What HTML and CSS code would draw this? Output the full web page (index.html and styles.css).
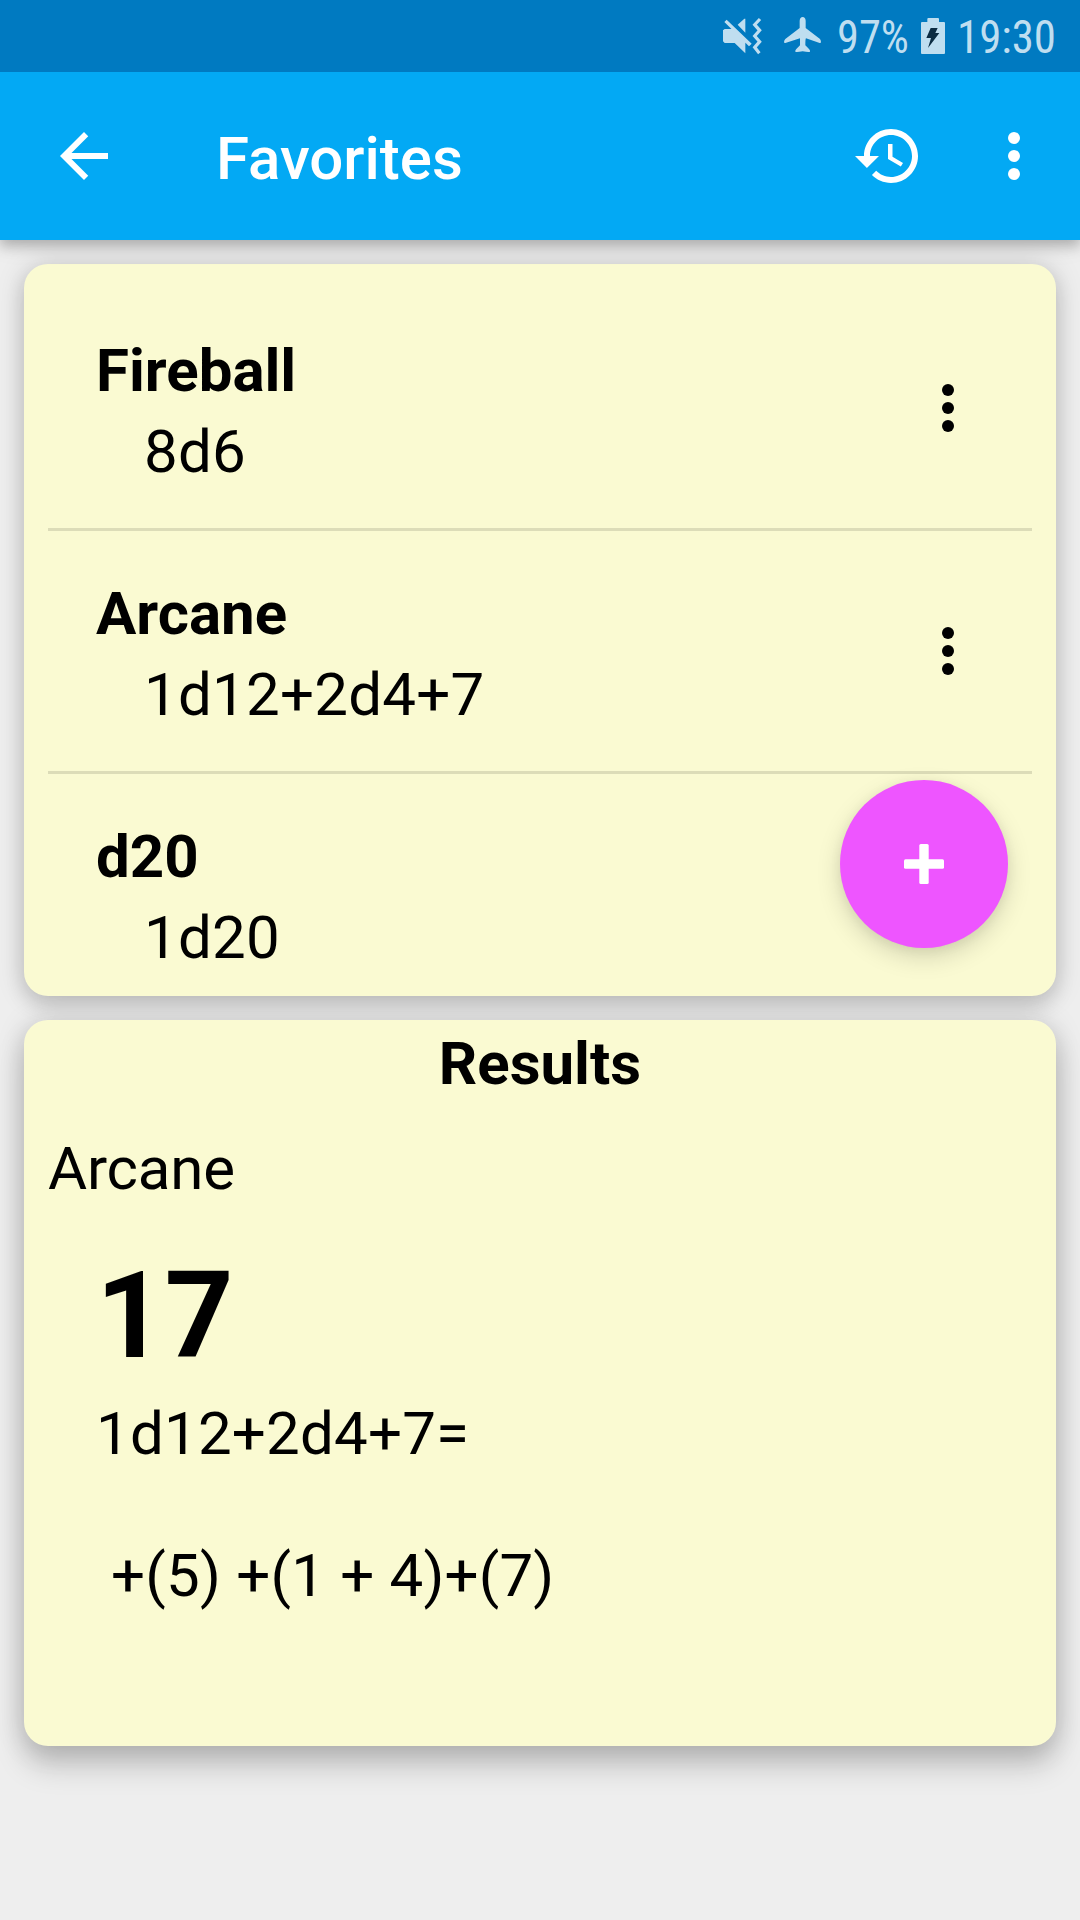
FILE: index.html
```html
<!DOCTYPE html>
<html lang="en">
<head>
<meta charset="utf-8">
<title>Favorites</title>
<link rel="stylesheet" href="styles.css">
</head>
<body>
<div class="screen">
  <div class="status-bar">
    <svg class="icon-mute" viewBox="66 48 120 120" width="40" height="40">
      <path fill="currentColor" d="M69 91L74 87H96L136 126V160L104 129H74L69 124ZM73 66L80 59L155 131L147 139ZM113 74L133 56H136V98Z"/>
      <path fill="none" stroke="currentColor" stroke-width="9.5" d="M180 57L164 74L179 91L164 108L179 125L164 142L178 160"/>
    </svg>
    <svg class="icon-plane" viewBox="249 48 117 120" width="39" height="40">
      <path fill="currentColor" d="M299 62Q300 51 308 51Q316 51 317 62V84L360 117Q363 121 363 127Q362 130 359 129L318 115Q316 116 316 136L327 147Q331 150 330 155Q328 158 308 154Q288 158 286 155Q285 150 289 147L300 136V115L256 129Q253 130 252 127Q252 121 256 117L299 84Z"/>
    </svg>
    <svg class="status-text battery-level" width="76" height="72"><text x="2" y="53" textLength="72" lengthAdjust="spacingAndGlyphs">97%</text></svg>
    <svg class="icon-battery" viewBox="663 48 72 120" width="24" height="40">
      <path fill="currentColor" d="M682 57Q682 54 685 54H714Q717 54 717 57V66H732Q735 66 735 69V159Q735 162 732 162H666Q663 162 663 159V69Q663 66 666 66H682Z"/>
      <path class="bolt" d="M692 84H713L706 99H718L684 144L693 114H679Z"/>
    </svg>
    <svg class="status-text clock" width="104" height="72"><text x="3" y="53" textLength="99" lengthAdjust="spacingAndGlyphs">19:30</text></svg>
  </div>

  <header class="app-bar">
    <svg class="icon" viewBox="0 0 24 24"><path d="M20 11H7.83l5.59-5.59L12 4l-8 8 8 8 1.41-1.41L7.83 13H20v-2z"/></svg>
    <h1 class="title">Favorites</h1>
    <svg class="icon" viewBox="0 0 24 24"><path d="M13 3c-4.97 0-9 4.03-9 9H1l3.89 3.89.07.14L9 12H6c0-3.87 3.13-7 7-7s7 3.13 7 7-3.13 7-7 7c-1.93 0-3.68-.79-4.94-2.06l-1.42 1.42C8.27 19.99 10.51 21 13 21c4.97 0 9-4.03 9-9s-4.03-9-9-9zm-1 5v5l4.28 2.54.72-1.21-3.5-2.08V8H12z"/></svg>
    <svg class="icon overflow" viewBox="0 0 24 24"><circle cx="12" cy="6" r="2"/><circle cx="12" cy="12" r="2"/><circle cx="12" cy="18" r="2"/></svg>
  </header>

  <main class="content">
    <section class="card favorites">
      <ul class="list">
        <li class="row">
          <div><div class="name">Fireball</div><div class="dice">8d6</div></div>
          <svg class="icon" viewBox="0 0 24 24"><circle cx="12" cy="6" r="2"/><circle cx="12" cy="12" r="2"/><circle cx="12" cy="18" r="2"/></svg>
        </li>
        <li class="row">
          <div><div class="name">Arcane</div><div class="dice">1d12+2d4+7</div></div>
          <svg class="icon" viewBox="0 0 24 24"><circle cx="12" cy="6" r="2"/><circle cx="12" cy="12" r="2"/><circle cx="12" cy="18" r="2"/></svg>
        </li>
        <li class="row">
          <div><div class="name">d20</div><div class="dice">1d20</div></div>
        </li>
      </ul>
      <button class="fab" aria-label="Add">
        <svg viewBox="0 0 40 40" width="40" height="40"><rect x="0" y="15.3" width="40" height="9.4" rx="1.5"/><rect x="15.3" y="0" width="9.4" height="40" rx="1.5"/></svg>
      </button>
    </section>

    <section class="card results">
      <h2 class="heading">Results</h2>
      <div class="roll-name">Arcane</div>
      <div class="total">17</div>
      <div class="formula">1d12+2d4+7=</div>
      <div class="detail"> +(5) +(1 + 4)+(7)</div>
    </section>
  </main>
</div>
</body>
</html>
```

FILE: styles.css
```css
* { box-sizing: border-box; }

body {
  margin: 0;
  background: #eee;
  color: #000;
  font: 60px/81px Roboto, sans-serif;
}

.screen {
  display: flex;
  flex-direction: column;
  width: 1080px;
  height: 1920px;
  overflow: hidden;
}

.status-bar {
  position: relative;
  z-index: 2;
  display: flex;
  align-items: center;
  justify-content: flex-end;
  height: 72px;
  padding-right: 22px;
  background: #007ac1;
  color: #bfdef0;
}

.icon-plane { margin-left: 21px; }
.battery-level { margin-left: 13px; }
.icon-battery { margin-left: 10px; }
.clock { margin-left: 9px; }
.bolt { fill: #0b2c43; }

.status-text {
  overflow: visible;
  font-size: 46px;
  font-stretch: 75%;
  fill: currentColor;
}

.app-bar {
  position: relative;
  z-index: 1;
  display: flex;
  align-items: center;
  height: 168px;
  padding: 0 30px 0 48px;
  background: #03a9f4;
  color: #fff;
  box-shadow: 0 6px 12px rgba(0, 0, 0, 0.22), 0 3px 24px rgba(0, 0, 0, 0.1);
}

.icon {
  flex: none;
  width: 72px;
  height: 72px;
  fill: currentColor;
}

.overflow { margin-left: 54px; }

.title {
  flex: 1;
  margin: 4px 0 0 96px;
  font-size: 60px;
  font-weight: 500;
}

.content {
  display: flex;
  flex-direction: column;
  gap: 24px;
  padding: 24px;
}

.card {
  border-radius: 24px;
  background: #fafad2;
}

.favorites {
  position: relative;
  height: 732px;
  padding: 24px;
  box-shadow: 0 10px 20px rgba(0, 0, 0, 0.12), 0 2px 28px rgba(0, 0, 0, 0.17);
}

.list {
  height: 684px;
  margin: 0;
  padding: 0;
  overflow: hidden;
  list-style: none;
}

.row {
  display: flex;
  align-items: center;
  justify-content: space-between;
  height: 243px;
  padding: 5px 48px 0;
  border-bottom: 3px solid #dcdcb8;
}

.row:last-child { border-bottom-color: transparent; }
.row .icon { margin-top: -5px; }
.name { font-weight: 700; }

.dice {
  padding-left: 48px;
  letter-spacing: 0.25px;
}

.fab {
  position: absolute;
  right: 48px;
  bottom: 48px;
  display: flex;
  align-items: center;
  justify-content: center;
  width: 168px;
  height: 168px;
  padding: 0;
  border: 0;
  border-radius: 50%;
  background: #ee55ff;
  fill: #fff;
  box-shadow: 0 9px 24px rgba(0, 0, 0, 0.15), 0 2px 12px rgba(0, 0, 0, 0.06);
}

.results {
  position: relative;
  z-index: 1;
  height: 726px;
  padding: 3px 24px 0;
  box-shadow: 0 20px 30px rgba(0, 0, 0, 0.18), 0 2px 28px rgba(0, 0, 0, 0.17);
  clip-path: inset(-24px -24px -80px);
}

.heading {
  margin: 0 0 24px;
  font-size: 60px;
  font-weight: 700;
  text-align: center;
}

.roll-name { letter-spacing: -0.15px; }

.total {
  margin-top: 29px;
  padding-left: 48px;
  font-size: 120px;
  font-weight: 700;
  line-height: 157px;
}

.formula {
  margin-top: -2px;
  padding-left: 48px;
  letter-spacing: 0.2px;
}

.detail {
  margin-top: 61px;
  padding-left: 48px;
  letter-spacing: 0.2px;
  white-space: pre;
}
```
